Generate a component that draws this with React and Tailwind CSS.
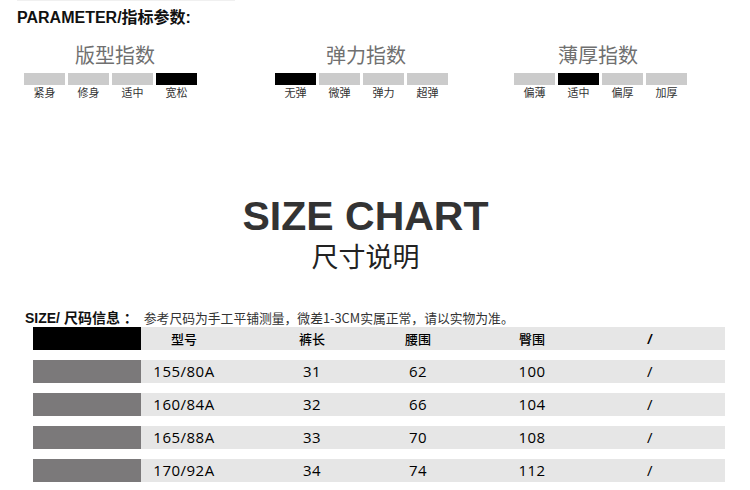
import React from 'react';

const cjk = "font-['Noto_Sans_CJK_SC','Noto_Sans',sans-serif]";

const groups = [
  { title: '版型指数', labels: ['紧身', '修身', '适中', '宽松'], active: 3, wrap: '', titleShift: 'pl-[9px] pt-[3px]' },
  { title: '弹力指数', labels: ['无弹', '微弹', '弹力', '超弹'], active: 0, wrap: 'ml-[78px]', titleShift: 'pl-[9px]' },
  { title: '薄厚指数', labels: ['偏薄', '适中', '偏厚', '加厚'], active: 1, wrap: 'ml-[66px]', titleShift: 'pr-[5px]' },
];

const rows = [
  ['155/80A', '31', '62', '100', '/'],
  ['160/84A', '32', '66', '104', '/'],
  ['165/88A', '33', '70', '108', '/'],
  ['170/92A', '34', '74', '112', '/'],
];

const cols = 'grid grid-cols-[86px_170px_42px_186px_50px_1fr] items-center h-full';

const IndexGroup = ({ title, labels, active, wrap, titleShift }) => (
  <div className={`w-[173px] flex flex-col justify-end ${wrap}`}>
    <div className={`text-center text-[20px] leading-[24px] text-[#707070] ${titleShift}`}>{title}</div>
    <div className="flex gap-[3px] mt-[6px]">
      {labels.map((l, i) => (
        <div key={l + i} className={`w-[41px] h-[12px] ${i === active ? 'bg-black' : 'bg-[#cbcbcb]'}`} />
      ))}
    </div>
    <div className="flex gap-[3px] mt-[1px]">
      {labels.map((l, i) => (
        <div key={l + i} className="w-[41px] text-center text-[11px] leading-[13px] text-[#333]">{l}</div>
      ))}
    </div>
  </div>
);

export default function App() {
  return (
    <div className={`w-[750px] h-[490px] bg-white overflow-hidden ${cjk}`}>
      <div className="ml-[17px] w-[218px] h-px bg-[#f0f0f0]" />

      {/* Parameter header */}
      <h1 className="ml-[17px] mt-[7px] text-[16px] leading-[20px] font-bold text-[#111] font-['Liberation_Sans','Noto_Sans_CJK_SC',sans-serif]">
        PARAMETER/指标参数:
      </h1>

      <div className="flex items-end pl-[24px] mt-[12px]">
        {groups.map((g) => (
          <IndexGroup key={g.title} {...g} />
        ))}
      </div>

      {/* Size chart title */}
      <div className="w-[731px] mt-[97px] text-center">
        <div className="text-[41px] leading-[41px] font-bold text-[#333] font-['Liberation_Sans',Arial,sans-serif]">
          SIZE CHART
        </div>
        <div className="mt-[4px] text-[27px] leading-[30px] text-[#222]">尺寸说明</div>
      </div>

      {/* Size info line */}
      <div className="flex items-baseline ml-[25px] mt-[39px] leading-[16px]">
        <span className="text-[14px] font-bold text-[#111] font-['Liberation_Sans','Noto_Sans_CJK_SC',sans-serif]">
          SIZE/ 尺码信息 ：
        </span>
        <span className="ml-[6px] text-[12.8px] text-[#333]">
          参考尺码为手工平铺测量，微差1-3CM实属正常，请以实物为准。
        </span>
      </div>

      {/* Table */}
      <div className="ml-[33px] mt-[1px] w-[692px] flex flex-col gap-[10px]">
        <div className="flex h-[23px]">
          <div className="w-[108px] bg-black" />
          <div className="flex-1 bg-[#e6e6e6]">
            <div className={`${cols} text-[13px] font-medium text-black text-center`}>
              <span>型号</span>
              <span>裤长</span>
              <span>腰围</span>
              <span>臀围</span>
              <span className="font-['Open_Sans',sans-serif] text-[15px] font-semibold">/</span>
              <span />
            </div>
          </div>
        </div>
        {rows.map((r) => (
          <div key={r[0]} className="flex h-[23px]">
            <div className="w-[108px] bg-[#7b797a]" />
            <div className="flex-1 bg-[#e6e6e6]">
              <div className={`${cols} text-[15px] tracking-[0.5px] font-medium text-black text-center font-['Open_Sans',sans-serif]`}>
                {r.map((c, i) => (
                  <span key={i}>{c}</span>
                ))}
                <span />
              </div>
            </div>
          </div>
        ))}
      </div>
    </div>
  );
}
